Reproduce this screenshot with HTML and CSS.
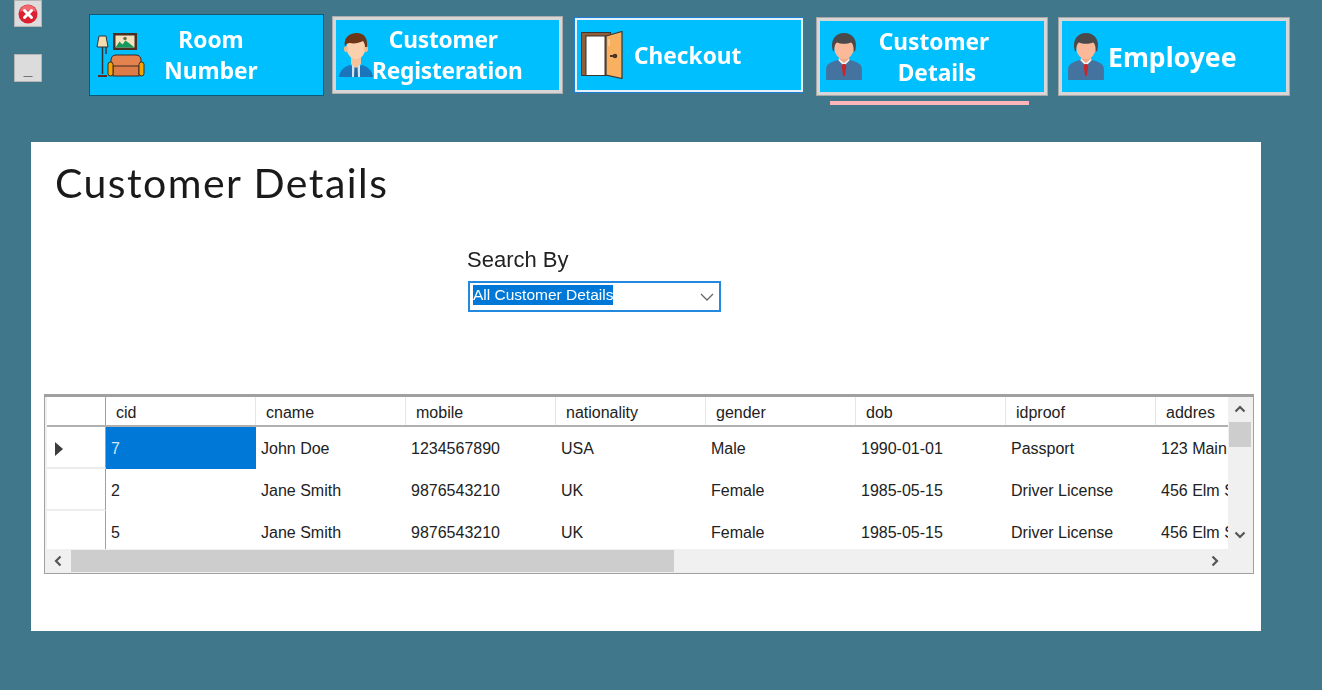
FILE: index.html
```html
<!DOCTYPE html>
<html lang="en">
<head>
<meta charset="utf-8">
<title>Customer Details</title>
<link rel="stylesheet" href="styles.css">
</head>
<body>
<svg class="defs" width="0" height="0" aria-hidden="true">
  <symbol id="person" viewBox="0 0 38 50">
    <path d="M0 50V38c0-4 3-6 8-8l7-2h8l7 2c5 2 8 4 8 8v12z" fill="#44739f"/>
    <path d="M13 29l6 6 6-6-1-3H14z" fill="#f4f4f4"/>
    <path d="M17.500 33h3l1 2-1.500 10-1 1-1-1-1.500-10z" fill="#c9252c"/>
    <path d="M14 22h10v6l-5 4-5-4z" fill="#f0a684"/>
    <ellipse cx="19" cy="15" rx="10.500" ry="13" fill="#fbb99a"/>
    <path d="M7 19C4 7 10 0 19 0c9 0 15 7 12 19l-1.500 1c0-5-1-9-3-10-4 2-11 2-15 0-2 1-3 5-3 10z" fill="#4a4a4c"/>
  </symbol>
</svg>

<header class="top">
  <div class="window-controls">
    <button class="win-btn win-close" type="button" aria-label="Close">
      <svg width="20" height="20" viewBox="0 0 20 20">
        <circle cx="10" cy="10" r="9.500" fill="#dd2030"/>
        <path d="M2 8a8 7 0 0 1 16 0c-3-2-13-2-16 0z" fill="#f06a70"/>
        <path d="M6.500 6.500l7 7M13.500 6.500l-7 7" stroke="#fff" stroke-width="3" stroke-linecap="round"/>
      </svg>
    </button>
    <button class="win-btn win-min" type="button">_</button>
  </div>

  <nav class="nav">
    <button class="nav-btn btn-room" type="button">
      <svg class="icon-room" width="50" height="46" viewBox="0 0 50 46">
        <rect x="17" y="1" width="24" height="17" fill="#4a2f22"/>
        <rect x="19.500" y="3.500" width="19" height="12" fill="#f3e3bd"/>
        <path d="M19.500 15.500l4-6 3 3 3-4 4 3 5 4z" fill="#149a5e"/>
        <circle cx="29" cy="6.500" r="1.800" fill="#6b6b50"/>
        <path d="M3 4h7l2 11H1z" fill="#f4dcae" stroke="#333" stroke-width="1"/>
        <path d="M6.500 15v27M10 15v7" stroke="#333" stroke-width="1.500"/>
        <path d="M2 43h9v2H2z" fill="#5c2b20"/>
        <path d="M15 35V28c0-3 2-5 5-5h20c3 0 5 2 5 5v7z" fill="#e5834f" stroke="#3a2a20" stroke-width="1"/>
        <rect x="17" y="34" width="26" height="10" fill="#dd7c49" stroke="#3a2a20" stroke-width="1"/>
        <rect x="12" y="30" width="5" height="14" rx="2.500" fill="#f7a400" stroke="#3a2a20" stroke-width="1"/>
        <rect x="43" y="30" width="5" height="14" rx="2.500" fill="#f7a400" stroke="#3a2a20" stroke-width="1"/>
      </svg>
      <span class="label label-room">Room<br>Number</span>
    </button>

    <button class="nav-btn btn-reg" type="button">
      <svg class="icon-man" width="34" height="44" viewBox="0 0 34 44">
        <path d="M0 44c1-7 5-10 11-12l6 4 6-4c6 2 10 5 11 12z" fill="#1b75ba"/>
        <path d="M13 31l4 3 4-3v13h-8z" fill="#cfe3f2"/>
        <path d="M15.500 34h3l.5 10h-4z" fill="#27689b"/>
        <path d="M12 23h10v8l-5 4-5-4z" fill="#f4c39c"/>
        <ellipse cx="17" cy="15" rx="9.500" ry="11" fill="#fbd1ad"/>
        <ellipse cx="7" cy="16" rx="2" ry="3" fill="#f4b98f"/>
        <ellipse cx="27" cy="16" rx="2" ry="3" fill="#f4b98f"/>
        <path d="M6 14C4 5 10 0 18 0c7 0 11 5 10 14l-2 0c0-3-1-5-2-6-4 2-9 3-13 2-3 0-4 1-5 4z" fill="#6c3617"/>
      </svg>
      <span class="label label-reg">Customer<br><span class="shift">Registeration</span></span>
    </button>

    <button class="nav-btn btn-checkout" type="button">
      <svg class="icon-door" width="42" height="48" viewBox="0 0 42 48">
        <rect x="0.500" y="1.500" width="29" height="43" fill="#8f5f3a" stroke="#3d3530" stroke-width="1"/>
        <rect x="5" y="5" width="19" height="39.500" fill="#fff" stroke="#3d3530" stroke-width="1"/>
        <path d="M25 5l16-4.500v47L25 44z" fill="#f9b060" stroke="#3d3530" stroke-width="1.200"/>
        <path d="M28 8v7" stroke="#fde2c0" stroke-width="1"/>
        <circle cx="34" cy="25" r="2.300" fill="#4a3528"/>
        <path d="M29 25h5" stroke="#4a3528" stroke-width="2"/>
      </svg>
      <span class="label label-checkout">Checkout</span>
    </button>

    <div class="nav-item">
      <button class="nav-btn btn-details" type="button">
        <svg class="icon-person" width="36" height="47"><use href="#person"/></svg>
        <span class="label label-details">Customer<br><span class="shift-sm">Details</span></span>
      </button>
      <div class="active-bar"></div>
    </div>

    <button class="nav-btn btn-employee" type="button">
      <svg class="icon-person" width="36" height="47"><use href="#person"/></svg>
      <span class="label label-employee">Employee</span>
    </button>
  </nav>
</header>

<main class="panel">
  <h1 class="title">Customer Details</h1>

  <section class="search">
    <label class="search-label">Search By</label>
    <div class="combo">
      <span class="combo-value">All Customer Details</span>
      <svg class="combo-arrow" width="14" height="8" viewBox="0 0 14 8"><path d="M1 1l6 6 6-6" fill="none" stroke="#666" stroke-width="1.300"/></svg>
    </div>
  </section>

  <section class="grid-view">
    <div class="viewport">
      <div class="row head">
        <div class="row-head"></div>
        <div class="cell">cid</div><div class="cell">cname</div><div class="cell">mobile</div><div class="cell">nationality</div><div class="cell">gender</div><div class="cell">dob</div><div class="cell">idproof</div><div class="cell">addres</div>
      </div>
      <div class="row">
        <div class="row-head"><span class="caret"></span></div>
        <div class="cell selected">7</div><div class="cell">John Doe</div><div class="cell">1234567890</div><div class="cell">USA</div><div class="cell">Male</div><div class="cell">1990-01-01</div><div class="cell">Passport</div><div class="cell">123 Main St</div>
      </div>
      <div class="row">
        <div class="row-head"></div>
        <div class="cell">2</div><div class="cell">Jane Smith</div><div class="cell">9876543210</div><div class="cell">UK</div><div class="cell">Female</div><div class="cell">1985-05-15</div><div class="cell">Driver License</div><div class="cell">456 Elm St</div>
      </div>
      <div class="row">
        <div class="row-head"></div>
        <div class="cell">5</div><div class="cell">Jane Smith</div><div class="cell">9876543210</div><div class="cell">UK</div><div class="cell">Female</div><div class="cell">1985-05-15</div><div class="cell">Driver License</div><div class="cell">456 Elm St</div>
      </div>
    </div>

    <div class="vscroll">
      <svg width="12" height="8" viewBox="0 0 12 8"><path d="M1.500 6.500L6 2l4.500 4.500" fill="none" stroke="#555" stroke-width="2.200"/></svg>
      <div class="vthumb"></div>
      <div class="spacer"></div>
      <svg width="12" height="8" viewBox="0 0 12 8"><path d="M1.500 1.500L6 6l4.500-4.500" fill="none" stroke="#555" stroke-width="2.200"/></svg>
    </div>

    <div class="hscroll">
      <svg class="h-left" width="8" height="12" viewBox="0 0 8 12"><path d="M6.500 1.500L2 6l4.500 4.500" fill="none" stroke="#555" stroke-width="2.200"/></svg>
      <div class="hthumb"></div>
      <svg class="h-right" width="8" height="12" viewBox="0 0 8 12"><path d="M1.500 1.500L6 6l-4.500 4.500" fill="none" stroke="#555" stroke-width="2.200"/></svg>
    </div>
    <div class="corner"></div>
  </section>
</main>
</body>
</html>
```
FILE: styles.css
```css
* { box-sizing: border-box; }
html, body { margin: 0; height: 690px; overflow: hidden; }
body { background: #40778b; font-family: "Liberation Sans", Arial, sans-serif; color: #222; filter: blur(.35px); }
.defs { position: absolute; }

.top { display: flex; height: 142px; padding-left: 14px; }

.window-controls { display: flex; flex-direction: column; gap: 27px; width: 28px; }
.win-btn { width: 28px; padding: 0; background: #dcdcdc; border: 1px solid #b4b4b4; display: flex; align-items: center; justify-content: center; }
.win-close { height: 27px; }
.win-min { height: 28px; font: bold 16px "Liberation Sans", sans-serif; color: #222; align-items: flex-end; padding-bottom: 2px; }

.nav { display: flex; align-items: flex-start; margin-left: 47px; }
.nav-item { display: flex; flex-direction: column; align-items: flex-start; margin: 17px 0 0 12px; }

.nav-btn { display: flex; align-items: center; padding: 0; background: #00bfff; color: #fff; font-family: "Noto Sans", "Open Sans", sans-serif; font-weight: 700; font-size: 22.7px; line-height: 31px; }
.label { display: block; text-align: center; }

.btn-room { width: 235px; height: 82px; margin-top: 14px; border: 1px solid #0b5a78; padding-left: 6px; }
.label-room { flex: 1; padding-right: 44px; margin-left: -3px; }

.btn-reg { width: 231px; height: 78px; margin: 16px 0 0 8px; border: 4px solid #d6d6d6; outline: 1px solid #adadad; outline-offset: -1px; padding-left: 3px; }
.icon-man { flex: none; }
.label-reg { flex: 1; margin-left: -5px; padding-right: 48px; letter-spacing: -.2px; }
.shift { position: relative; left: 4px; }

.btn-checkout { width: 230px; height: 76px; margin: 17px 0 0 11px; border: 3px solid #e4f1fb; outline: 1px solid #1a80d8; outline-offset: -1px; padding-left: 4px; }
.label-checkout { margin-left: 11px; }
.icon-door { flex: none; margin-top: -1px; }

.btn-details, .btn-employee { width: 232px; height: 79px; border: 4px solid #d6d6d6; outline: 1px solid #a8a8a8; outline-offset: -1px; padding-left: 6px; }
.btn-employee { margin: 17px 0 0 10px; }
.icon-person { flex: none; }
.label-details { flex: 1; padding-right: 38px; }
.shift-sm { position: relative; left: 3px; }
.label-employee { font-size: 26.6px; margin: 2px 0 0 4px; }

.active-bar { width: 199px; height: 4px; margin: 5px 0 0 14px; background: #ffb6bb; }

.panel { width: 1230px; height: 489px; margin-left: 31px; background: #fff; padding: 1px 0 0 13px; }
.title { margin: 0 0 0 11px; font-family: Lato, sans-serif; font-weight: 400; font-size: 41px; letter-spacing: 1.45px; line-height: 80px; color: #1a1a1a; }

.search { margin: 24px 0 0 423px; }
.search-label { display: block; font-size: 22px; line-height: 26px; }
.combo { display: flex; align-items: flex-start; justify-content: space-between; width: 253px; height: 31px; margin: 8px 0 0 1px; border: 2px solid #2389df; padding: 2px 5px 0 3px; background: #fff; }
.combo-value { background: #0078d7; color: #fff; font-size: 15.5px; line-height: 20px; }
.combo-arrow { margin-top: 8px; }

.grid-view { display: grid; grid-template-columns: 1181px 24px; grid-template-rows: 152px 24px; width: 1210px; height: 180px; margin-top: 82px; border: 1px solid #a0a0a0; border-top: 3px solid #a0a0a0; padding-left: 2px; background: #f0f0f0; }

.viewport { overflow: hidden; background: #fff; }
.row { display: flex; height: 42px; }
.row.head { height: 30px; border-bottom: 2px solid #b0b0b0; }
.row-head { display: flex; align-items: center; flex: none; width: 59px; padding: 3px 0 0 8px; background: #fff; border-right: 1px solid #a0a0a0; border-bottom: 2px solid #ececec; }
.caret { border-left: 8px solid #3c3c3c; border-top: 7px solid transparent; border-bottom: 7px solid transparent; }
.cell { flex: none; width: 150px; padding-left: 5px; font-size: 16px; line-height: 44px; white-space: nowrap; overflow: hidden; }
.head .cell { padding-left: 10px; line-height: 31px; border-right: 1px solid #e6e6e6; }
.head .row-head { border-bottom: 0; }
.selected { background: #0078d7; color: #cfe6f8; }

.vscroll { display: flex; flex-direction: column; align-items: center; padding: 8px 0 10px; background: #f0f0f0; }
.vthumb { align-self: stretch; height: 25px; margin: 9px 1px 0 1px; background: #cdcdcd; }
.spacer { flex: 1; }

.hscroll { display: flex; align-items: center; padding: 0 9px 0 7px; background: #f0f0f0; }
.hthumb { width: 603px; height: 22px; margin-left: 9px; background: #cdcdcd; }
.h-right { margin-left: auto; }
.corner { background: #f0f0f0; }
```
